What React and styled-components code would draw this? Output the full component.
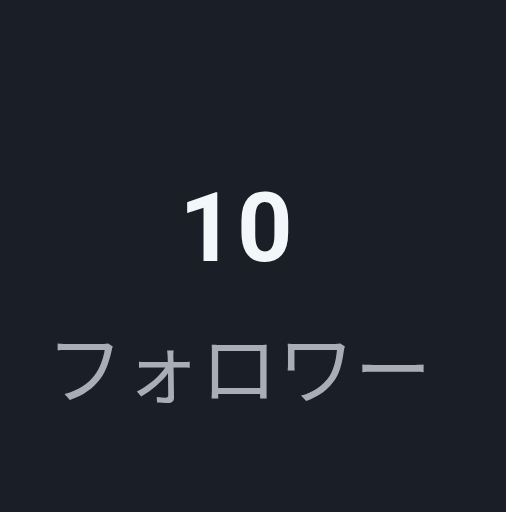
import styled, { createGlobalStyle } from "styled-components";

const GlobalStyle = createGlobalStyle`
   html, body {
      margin: 0;
      padding: 0;
      background: #1a1f27;
   }
`;

export default function App() {
   return (
      <>
         <GlobalStyle />
         <Page>
            <Stat>
               <Count>10</Count>
               <Label>フォロワー</Label>
            </Stat>
         </Page>
      </>
   );
}

const Page = styled.div`
   width: 506px;
   height: 512px;
   display: flex;
   justify-content: center;
   align-items: center;
   padding-right: 28px;
   box-sizing: border-box;
   background: #1a1f27;
`;

const Stat = styled.div`
   display: flex;
   flex-direction: column;
   align-items: center;
   margin-top: 73px;
`;

const Count = styled.div`
   font-family: Roboto, "Noto Sans", sans-serif;
   font-weight: 700;
   font-size: 97px;
   line-height: 1.2;
   letter-spacing: 2px;
   color: #f4f7f9;
   margin-right: 4px;
`;

const Label = styled.div`
   font-family: "Noto Sans CJK JP", sans-serif;
   font-weight: 400;
   font-size: 77px;
   line-height: 1.3;
   margin-top: 29px;
   color: #a9adb5;
`;
